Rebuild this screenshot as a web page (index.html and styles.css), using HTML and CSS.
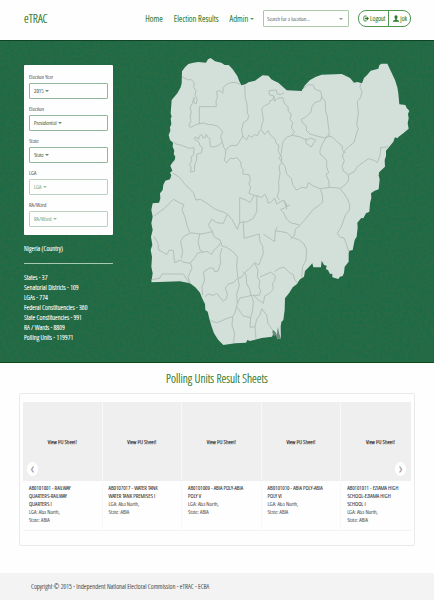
FILE: index.html
```html
<!DOCTYPE html>
<html lang="en">
<head>
<meta charset="utf-8">
<meta name="viewport" content="width=device-width, initial-scale=1">
<title>eTRAC</title>
<link rel="stylesheet" href="styles.css">
</head>
<body>
<header class="topbar">
  <a class="brand" href="#">eTRAC</a>
  <nav class="nav">
    <a href="#">Home</a>
    <a href="#">Election Results</a>
    <a href="#">Admin <i class="caret"></i></a>
  </nav>
  <div class="search">
    <input type="text" placeholder="Search for a location..." aria-label="Search for a location">
    <i class="caret"></i>
  </div>
  <div class="account">
    <button type="button"><svg class="icon" viewBox="0 0 12 14" aria-hidden="true"><path d="M7 2H4Q1.500 2 1.500 5V9Q1.500 12 4 12H7" fill="none" stroke="currentColor" stroke-width="1.800"/><path d="M4 5.500H7.500V2.500L12 7L7.500 11.500V8.500H4Z" fill="currentColor"/></svg>Logout</button>
    <button type="button"><svg class="icon" viewBox="0 0 12 14" aria-hidden="true"><path d="M6 0.500C8 0.500 9 2 9 4C9 6 8.200 7.200 7.500 8V9.500L12 11.500V13.500H0V11.500L4.500 9.500V8C3.800 7.200 3 6 3 4C3 2 4 0.500 6 0.500Z" fill="currentColor"/></svg>jok</button>
  </div>
</header>

<main>
  <section class="hero">
    <svg class="texture" aria-hidden="true">
      <filter id="grain"><feTurbulence type="fractalNoise" baseFrequency="0.35" numOctaves="2" seed="4"/><feColorMatrix values="0 0 0 0 0  0 0 0 0 0.150  0 0 0 0 0.080  0.900 0 0 0 -0.320"/></filter>
      <rect width="100%" height="100%" filter="url(#grain)"/>
    </svg>
    <aside class="side">
      <form class="filters">
        <div class="field"><label for="year">Election Year</label><div class="pick"><select id="year"><option>2015</option></select><i class="caret"></i></div></div>
        <div class="field"><label for="election">Election</label><div class="pick"><select id="election"><option>Presidential</option></select><i class="caret"></i></div></div>
        <div class="field"><label for="state">State</label><div class="pick"><select id="state"><option>State</option></select><i class="caret"></i></div></div>
        <div class="field"><label for="lga">LGA</label><div class="pick off"><select id="lga" disabled><option>LGA</option></select><i class="caret"></i></div></div>
        <div class="field"><label for="ward">RA/Ward</label><div class="pick off"><select id="ward" disabled><option>RA/Ward</option></select><i class="caret"></i></div></div>
      </form>
      <h2 class="place">Nigeria (Country)</h2>
      <ul class="stats">
        <li>States - 37</li>
        <li>Senatorial Districts - 109</li>
        <li>LGAs - 774</li>
        <li>Federal Constituencies - 360</li>
        <li>State Constituencies - 991</li>
        <li>RA / Wards - 8809</li>
        <li>Polling Units - 119971</li>
      </ul>
    </aside>
    <svg class="map" viewBox="0 0 810 900" role="img" aria-label="Map of Nigeria">
      <path class="land" d="M38 460L57 458L61 446L60 430L68 420L70 404L76 392L90 388L94 376L90 368L97 362L91 347L97 338L104 330L106 320L101 312L103 302L98 290L99 278L90 270L86 255L91 242L90 232L94 222L92 205L95 200L92 190L95 150L112 130L122 112L125 100L126 64L135 52L145 42L160 38L175 36L198 38L204 28L212 24L225 34L244 38L254 45L266 45L278 58L292 78L298 94L304 106L318 102L325 97L345 92L356 84L368 76L385 77L394 88L402 92L415 98L430 112L440 121L485 123L495 106L510 90L528 80L545 74L605 72L618 78L630 84L642 98L652 96L666 100L672 84L682 74L692 62L715 56L718 46L724 41L742 41L752 62L765 90L772 112L775 130L778 163L796 165L800 174L808 182L804 192L806 205L803 220L806 236L790 250L776 260L772 265L765 262L760 275L748 290L738 302L738 318L734 330L735 350L718 366L716 376L719 388L716 418L704 422L693 430L694 444L690 460L688 485L678 490L670 505L664 504L652 518L653 532L650 560L644 570L638 600L628 602L626 610L626 635L614 650L612 668L608 678L600 680L595 687L577 682L577 671L570 672L564 660L558 658L560 647L552 645L545 632L543 652L520 652L517 640L506 652L495 663L492 680L480 688L470 703L458 712L448 728L435 745L434 780L430 810L424 816L422 830L423 865L412 868L408 850L402 842L398 856L396 860L365 864L330 873L322 870L318 878L285 880L250 885L235 870L222 850L215 830L208 806L203 785L196 780L195 762L186 744L180 728L166 712L150 700L120 694L34 697L38 670L34 650L36 620L32 600L37 585L33 560L38 540L34 520L38 500L34 480Z"/>
      <path class="creek" d="M398 838L404 845L410 855L414 830L418 852L423 865L412 868L408 856L402 858L397 848Z"/>
      <g class="borders">
        <path d="M126 80L144 90L152 88L163 98L161 112L168 122L165 136L172 148L168 162L162 158L162 142L157 160L150 175L154 186L150 202L153 212L146 228L153 232L170 223L190 219L206 224L218 224L234 229L248 245L242 260L247 276L236 286L222 291L211 290L209 265L203 262L199 253L196 262L190 264L185 253L178 258L176 268L166 260L164 268L178 278L180 288L187 292L185 308L170 313L170 330L164 345L163 364L152 366L153 350L148 344L156 330L152 321L161 315L162 293L148 295L125 286L108 282L100 276"/>
        <path d="M178 222V170H229L228 152L232 142L230 124L240 122L248 130L250 112L258 104L272 98L285 97L301 103M314 106L316 145L321 162L322 190L327 198L322 210L310 218L305 240L309 260L320 270L326 256L336 262L343 254L353 257L356 246L363 238L366 222L370 212L368 194L365 176L373 168L388 160L390 152L398 150L402 138L388 134L387 122L408 120L412 132L422 134L432 128M309 258L300 272L291 286L270 287L257 301L250 290L249 280L244 278M257 301L256 320L253 330L260 339L270 325L282 326L290 322L302 336L304 351L310 360L308 372L328 374L331 390L326 402L332 410L327 430L343 436L366 442L374 432L381 445L385 460L396 454L404 444L410 462L430 450L440 470L450 464"/>
        <path d="M402 138L404 154L412 145L428 143L434 162L444 170L445 185L454 192L450 208L458 218L454 235L464 245L455 256L440 262L430 274L426 290L424 310L418 325L428 340L435 350L440 372L454 385L458 404L470 420L485 412L500 414L505 398L520 408L540 416L570 412L602 415L618 402L626 390L625 374L611 364L606 350L613 332L607 318L614 302L626 290L642 278L650 250L655 236L650 225L655 190L652 155L662 142L666 124L660 112L662 101M625 374L642 366L652 350L674 334L686 326L704 332L712 338L720 316L722 293L745 290M364 240L374 254L385 242L390 254L406 268L408 280L417 286L414 303L425 320L424 340L417 348L420 370L416 395L417 420L412 440L418 450M456 256L478 260L498 270L512 264L528 271L520 280L514 291L498 280L498 264M486 120L504 104L520 105L524 117L542 124L545 138L542 152L524 158L516 170L513 186L496 202L484 208L488 220L498 226L500 242L510 252L530 258L554 264L564 257L578 262L592 276L607 288L607 300L616 310M545 140L556 155L557 185L562 200L564 220L567 242L567 258L556 266L548 280L540 300L540 312L550 320L560 332L560 350L566 368L558 374L566 392L568 413M542 418L547 436L548 456L532 470L520 478L498 505L480 526L465 521L455 520L440 508L432 490L422 478L434 474L442 465L434 458M600 416L612 430L622 446L629 464L628 480L616 496L604 530L592 550L600 562L612 564L620 584L626 605"/>
        <path d="M42 498L72 476L100 448L115 456L132 464L126 478L136 505L142 530L150 548L180 552L195 550L215 545L224 562L240 570L246 588L260 592L280 606L292 620L290 650L294 686L306 680L320 662L332 652L344 638L356 645L370 610L368 588L360 576L358 552L330 560L312 565L310 515L299 518V443L318 450L330 458L343 436M351 436L350 485L340 505L320 516L311 515M299 518L292 538L276 508L262 492L250 520L230 518L215 508L205 526L220 548M97 368L118 382L136 404L160 428L168 450L182 448L198 458L226 478L250 486L262 492M42 560L54 580L56 600L68 606L80 614L88 600L100 602L104 638L122 630L128 636L150 640L165 622L172 610L186 606L204 605L215 614L222 600L234 590L242 578M150 550L130 560L122 574L128 604L124 625M180 550L174 575L180 600L190 607M152 640L156 655L144 680L150 699M34 690L60 684L66 672L130 672L142 690L150 700"/>
        <path d="M188 736L186 710L194 690L190 666L208 654L220 654L224 665L234 663L242 638L240 616L246 594M195 740L204 732L220 736L230 730L240 742L250 754L260 745L262 732L256 714L265 702L280 698L292 686M294 687L298 706L290 732L292 760L285 788L278 800L258 806L246 812L230 818L212 812M292 760L300 744L320 740L334 736L340 752L338 780L332 803L310 798L300 784L290 770M278 800L276 826L284 850L280 880M332 803L330 832L345 830L348 866M345 830L350 808L360 794L365 776L380 795L384 820L396 838M308 665L318 674L320 700L330 720L332 736L358 736L362 722L356 708L360 694L352 680L354 660L344 640M360 680L374 675L392 666L406 678L404 692L398 700L400 718L386 732L374 738L370 760L356 750L340 736M404 665L420 654L434 652L448 668L460 674L464 690L474 700M370 552L404 575L406 542L440 548L456 562L478 570L492 582L500 600L498 630L488 650L485 682M406 542L412 530M480 526L466 538L464 555L452 568M434 452L440 478"/>
      </g>
    </svg>
  </section>

  <section class="results">
    <h1>Polling Units Result Sheets</h1>
    <div class="panel">
      <div class="track">
        <article class="sheet"><a class="thumb" href="#">View PU Sheet!</a><div class="info"><h3>AB0101001 - RAILWAY QUARTERS-RAILWAY QUARTERS I</h3><p>LGA: Aba North,<br>State: ABIA</p></div></article>
        <article class="sheet"><a class="thumb" href="#">View PU Sheet!</a><div class="info"><h3>AB0107017 - WATER TANK WATER TANK PREMISES I</h3><p>LGA: Aba North,<br>State: ABIA</p></div></article>
        <article class="sheet"><a class="thumb" href="#">View PU Sheet!</a><div class="info"><h3>AB0101009 - ABIA POLY-ABIA POLY V</h3><p>LGA: Aba North,<br>State: ABIA</p></div></article>
        <article class="sheet"><a class="thumb" href="#">View PU Sheet!</a><div class="info"><h3>AB0101010 - ABIA POLY-ABIA POLY VI</h3><p>LGA: Aba North,<br>State: ABIA</p></div></article>
        <article class="sheet"><a class="thumb" href="#">View PU Sheet!</a><div class="info"><h3>AB0101011 - EZIAMA HIGH SCHOOL-EZIAMA HIGH SCHOOL I</h3><p>LGA: Aba North,<br>State: ABIA</p></div></article>
      </div>
      <button class="arrow prev" type="button" aria-label="Previous">❮</button>
      <button class="arrow next" type="button" aria-label="Next">❯</button>
    </div>
  </section>
</main>

<footer class="footer">Copyright © 2015 - Independent National Electoral Commission - eTRAC - ECBA</footer>
</body>
</html>
```
FILE: styles.css
```css
* { box-sizing: border-box; }

body {
  display: flex;
  flex-direction: column;
  min-height: 100vh;
  margin: 0;
  background: #fefefe;
  color: #5c5c5c;
  font-family: "Open Sans Condensed Light", "Open Sans Condensed", "Liberation Sans Narrow", "Open Sans", sans-serif;
  font-size: 6px;
  font-weight: 300;
  line-height: 8px;
  text-shadow: 0 0 0 currentColor;
}

a { color: inherit; text-decoration: none; }
h1, h2, h3, p, ul { margin: 0; padding: 0; font-weight: 300; }
ul { list-style: none; }
button, input, select { font: inherit; color: inherit; text-shadow: inherit; }

.caret {
  display: inline-block;
  border: 2px solid transparent;
  border-top-color: currentColor;
  border-bottom: 0;
  vertical-align: middle;
  opacity: 0.8;
}

.topbar {
  display: flex;
  align-items: center;
  height: 40px;
  padding: 0 23px 3px 24px;
  color: #3a833a;
}
.brand { font-size: 12px; line-height: 14px; }
.nav {
  display: flex;
  gap: 11px;
  margin-left: auto;
  font-size: 9px;
  line-height: 10px;
  white-space: nowrap;
}
.search {
  display: flex;
  align-items: center;
  width: 86px;
  height: 17px;
  margin: 0 9px;
  padding: 0 5px 0 3px;
  border: 1px solid #a9c9a9;
  border-radius: 1px;
  color: #777;
}
.search input {
  flex: 1;
  min-width: 0;
  padding: 0;
  border: 0;
  outline: 0;
  background: none;
}
.search input::placeholder { color: #777; opacity: 1; }
.account {
  display: flex;
  height: 17px;
  border: 1px solid #4f974f;
  border-radius: 8px;
  color: #2a7d2a;
}
.account button {
  display: flex;
  align-items: center;
  gap: 1px;
  padding: 0 3px 0 4px;
  border: 0;
  background: none;
  font-size: 7px;
}
.account button + button { border-left: 1px solid #4f974f; }
.icon { width: 6px; height: 7px; }

.hero {
  position: relative;
  display: grid;
  grid-template-columns: 89px 1fr;
  gap: 27px;
  padding: 9px 24px 12px;
  border-top: 1px solid #0f4526;
  border-bottom: 1px solid #0c4a18;
  background: #286a43;
  color: #fff;
}
.texture { position: absolute; inset: 0; width: 100%; height: 100%; }
.side, .map { position: relative; }
.side { padding-top: 15px; }
.filters {
  display: grid;
  gap: 6px;
  padding: 8px 5px;
  border-radius: 1px;
  background: #fefefe;
  color: #48694f;
}
.field { display: grid; gap: 1px; }
.field label { line-height: 9px; color: #6a6a6a; }
.pick {
  display: flex;
  align-items: center;
  gap: 1px;
  height: 16px;
  padding: 0 4px;
  border: 1px solid #8fb59c;
  border-radius: 1px;
}
.pick.off { color: #7fae8c; border-color: #b9d1c0; }
.pick select {
  appearance: none;
  padding: 0;
  border: 0;
  background: none;
  opacity: 1;
}
.place {
  padding: 9px 0 9px;
  border-bottom: 1px solid #a8c9b3;
  font-size: 7px;
  line-height: 10px;
}
.stats { padding-top: 9px; font-size: 7px; line-height: 10px; white-space: nowrap; }
.map { display: block; width: 100%; max-width: 360px; }
.land { fill: #d3e0da; }
.creek { fill: #6d8d7c; }
.borders { fill: none; stroke: #b3bfb9; stroke-width: 3; stroke-linejoin: round; }

.results { padding: 8px 19px 27px; }
.results h1 {
  margin-bottom: 6px;
  color: #3a833a;
  font-size: 12px;
  line-height: 16px;
  text-align: center;
}
.panel {
  position: relative;
  padding: 8px 3px 14px;
  border: 1px solid #e9e9e9;
  border-radius: 2px;
}
.track {
  display: grid;
  grid-auto-flow: column;
  grid-auto-columns: 20.5%;
  overflow: hidden;
}
.sheet { border-right: 1px solid #f8f8f8; border-bottom: 1px solid #f3f3f3; }
.thumb {
  display: grid;
  place-items: center;
  height: 79px;
  background: #efefef;
  color: #222;
  font-weight: 700;
  text-shadow: none;
}
.info { padding: 3px 14px 4px 6px; min-height: 49px; }
.info h3 { font-size: 6px; line-height: 8px; color: #333; }
.arrow {
  position: absolute;
  top: 68px;
  width: 11px;
  height: 14px;
  padding: 0;
  border: 0;
  border-radius: 50%;
  background: #fff;
  color: #999;
  text-shadow: none;
}
.prev { left: 7px; }
.next { right: 8px; }

.footer {
  flex: 1;
  padding: 9px 31px;
  background: #f3f3f3;
  color: #5c5c5c;
  font-size: 7px;
  line-height: 10px;
}
```
